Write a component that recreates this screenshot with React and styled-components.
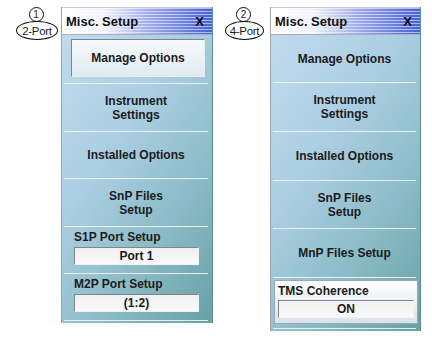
import styled, { createGlobalStyle } from "styled-components";

const GlobalStyle = createGlobalStyle`
  body {
    margin: 0;
    background: #ffffff;
    font-family: "Liberation Sans", Arial, sans-serif;
    color: #1b1b1b;
  }
`;

const Page = styled.div`
  display: flex;
  align-items: flex-start;
  width: 432px;
  height: 338px;
  box-sizing: border-box;
  padding: 7px 0 0 16px;
`;

const Figure = styled.div`
  display: flex;
  align-items: flex-start;
  gap: ${(p) => p.$gap}px;
  margin-left: ${(p) => p.$offset || 0}px;
`;

const Callout = styled.div`
  width: ${(p) => p.$w}px;
  display: flex;
  flex-direction: column;
  align-items: center;
`;

const Num = styled.div`
  width: 13px;
  height: 13px;
  border: 1px solid #111;
  border-radius: 50%;
  display: flex;
  align-items: center;
  justify-content: center;
  font-size: 10px;
  line-height: 1;
  margin-left: ${(p) => p.$shift || 0}px;
`;

const Pill = styled.div`
  width: 100%;
  box-sizing: border-box;
  height: 19px;
  margin-top: -1px;
  border: 1.6px solid #111;
  border-radius: 50%;
  display: flex;
  align-items: center;
  justify-content: center;
  font-size: 11.5px;
  letter-spacing: -0.3px;
`;

const Panel = styled.div`
  width: ${(p) => p.$w}px;
  box-sizing: border-box;
  border-left: 1px solid #9aa4aa;
  border-right: 1px solid #5d8d94;
  padding-bottom: 2px;
  background: linear-gradient(
    125deg,
    #c4dcf0 0%,
    #abcee2 40%,
    #8bbbc6 70%,
    #68a0a6 100%
  );
`;

const TitleBar = styled.div`
  height: 28px;
  box-sizing: border-box;
  display: flex;
  align-items: center;
  justify-content: space-between;
  padding: 0 8px 0 4px;
  border-top: 1px solid #c8c8d8;
  border-bottom: 1px solid #a6aec4;
  font-size: 13px;
  font-weight: bold;
  color: #111;
  background: repeating-linear-gradient(
      to bottom,
      rgba(255, 255, 255, 0.55) 0 1px,
      rgba(255, 255, 255, 0) 1px 3px
    ),
    linear-gradient(to right, #ffffff 0%, #f2f3fb 28%, #9eabec 58%, #4660da 100%);
`;

const Section = styled.div`
  height: ${(p) => p.$h}px;
  box-sizing: border-box;
  margin: 0 4px 0 2px;
  border-bottom: 1px solid rgba(244, 249, 252, 0.85);
  display: flex;
  align-items: center;
  justify-content: center;
  text-align: center;
  font-size: 12px;
  font-weight: bold;
  line-height: 14px;
`;

const Pressed = styled.div`
  align-self: stretch;
  flex: 1;
  margin: 4px 3px 6px 7px;
  display: flex;
  align-items: center;
  justify-content: center;
  border-top: 1px solid #7d858a;
  border-left: 1px solid #7d858a;
  border-right: 1px solid #e8eef0;
  border-bottom: 1px solid #e8eef0;
  background: linear-gradient(to bottom, #f7fafb, #dfeaf0);
`;

const PortSection = styled.div`
  height: ${(p) => p.$h}px;
  box-sizing: border-box;
  margin: 0 4px 0 2px;
  padding: 3px 9px 0 10px;
  border-bottom: 1px solid rgba(244, 249, 252, 0.85);
  font-size: 12px;
  font-weight: bold;
  line-height: 14px;
`;

const Field = styled.div`
  height: 18px;
  box-sizing: border-box;
  margin-top: ${(p) => p.$mt}px;
  display: flex;
  align-items: center;
  justify-content: center;
  font-size: 12px;
  font-weight: bold;
  border-top: 1px solid #80868a;
  border-left: 1px solid #80868a;
  border-right: 1px solid #f2f2f2;
  border-bottom: 1px solid #f2f2f2;
  background: linear-gradient(to bottom, #f0f0f0, #fafafa);
`;

const GroupBox = styled.div`
  margin: 2px 2px 4px 3px;
  padding: 3px 3px 5px 3px;
  border: 1px solid #9aa7ad;
  background: linear-gradient(to bottom, #ffffff 0%, #eef3f6 45%, #d8e4ea 100%);
  font-size: 12px;
  font-weight: bold;
  line-height: 14px;
`;

const Rule = styled.div`
  height: 1px;
  margin: 0 4px 0 2px;
  background: rgba(244, 249, 252, 0.85);
`;

const TwoPort = () => (
  <Figure $gap={3}>
    <Callout $w={42}>
      <Num $shift={-2}>1</Num>
      <Pill>2-Port</Pill>
    </Callout>
    <Panel $w={152}>
      <TitleBar>
        <span>Misc. Setup</span>
        <span>X</span>
      </TitleBar>
      <Section $h={49}>
        <Pressed>Manage Options</Pressed>
      </Section>
      <Section $h={48}>
        Instrument
        <br />
        Settings
      </Section>
      <Section $h={47}>Installed Options</Section>
      <Section $h={48}>
        SnP Files
        <br />
        Setup
      </Section>
      <PortSection $h={47}>
        S1P Port Setup
        <Field $mt={3}>Port 1</Field>
      </PortSection>
      <PortSection $h={47}>
        M2P Port Setup
        <Field $mt={3}>(1:2)</Field>
      </PortSection>
    </Panel>
  </Figure>
);

const FourPort = () => (
  <Figure $gap={6} $offset={12}>
    <Callout $w={39}>
      <Num $shift={-2}>2</Num>
      <Pill>4-Port</Pill>
    </Callout>
    <Panel $w={151}>
      <TitleBar>
        <span>Misc. Setup</span>
        <span>X</span>
      </TitleBar>
      <Section $h={48}>Manage Options</Section>
      <Section $h={49}>
        Instrument
        <br />
        Settings
      </Section>
      <Section $h={49}>Installed Options</Section>
      <Section $h={48}>
        SnP Files
        <br />
        Setup
      </Section>
      <Section $h={49}>MnP Files Setup</Section>
      <GroupBox>
        TMS Coherence
        <Field $mt={2}>ON</Field>
      </GroupBox>
      <Rule />
    </Panel>
  </Figure>
);

export default function App() {
  return (
    <>
      <GlobalStyle />
      <Page>
        <TwoPort />
        <FourPort />
      </Page>
    </>
  );
}
